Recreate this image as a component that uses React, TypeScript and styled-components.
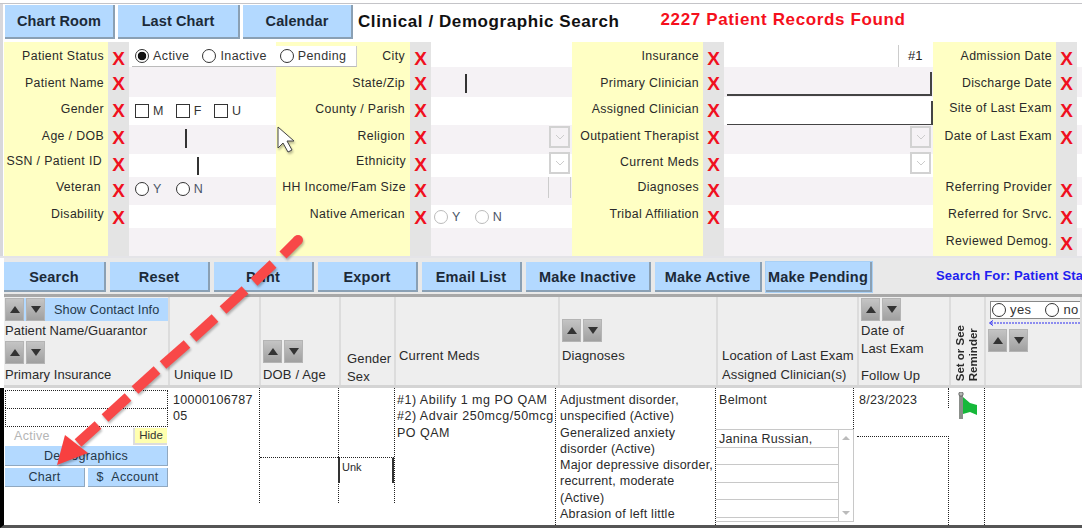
import React from "react";
import styled, { createGlobalStyle } from "styled-components";

const Global = createGlobalStyle`
  html, body { margin: 0; padding: 0; background: #fff; }
  body { font-family: "Liberation Sans", Arial, sans-serif; color: #222; }
`;

const Page = styled.div`
  position: relative;
  width: 1082px;
  height: 528px;
  overflow: hidden;
  background: #fff;
`;

const TopBar = styled.div`
  height: 39px;
  margin-top: 3px;
  padding: 1px 0 0 5px;
  box-sizing: border-box;
  border-top: 1px solid #c4c4c8;
  display: flex;
  align-items: flex-start;
  gap: 3px;
  box-shadow: inset 3px 0 0 #d8d8dc;
`;

const Tab = styled.button<{ $w: number }>`
  width: ${(p) => p.$w}px;
  height: 34px;
  background: #b3d9ff;
  border: 0;
  border-right: 2px solid #8aa0b4;
  border-bottom: 2px solid #8aa0b4;
  font: bold 14.5px "Liberation Sans", sans-serif;
  letter-spacing: 0.1px;
  color: #1c2a38;
  padding: 0;
`;

const Title = styled.div`
  margin-left: 2px;
  line-height: 33px;
  font-size: 17px;
  font-weight: bold;
  color: #111;
  letter-spacing: 0.58px;
  white-space: nowrap;
`;

const Count = styled.div`
  margin-left: 38px;
  line-height: 30px;
  font-size: 17px;
  font-weight: bold;
  color: #f5101c;
  letter-spacing: 0.63px;
  white-space: nowrap;
`;

const Form = styled.div`
  padding-left: 4px;
  box-shadow: inset 3px 0 0 #d8d8dc;
  border-bottom: 2px solid #e4e4e8;
`;

const Row = styled.div<{ $h: number }>`
  display: grid;
  grid-template-columns: 104px 21px 147px 134px 21px 141px 131px 21px 209px 123px 21px 1fr;
  height: ${(p) => p.$h}px;
`;

const Label = styled.div<{ $top: number; $pad?: number }>`
  background: #ffffc4;
  text-align: right;
  box-sizing: border-box;
  padding: ${(p) => p.$top}px ${(p) => p.$pad ?? 4}px 0 0;
  font-size: 12.3px;
  line-height: 14px;
  letter-spacing: 0.38px;
  color: #2a2a2a;
  white-space: nowrap;
`;

const Clear = styled.div<{ $top: number }>`
  background: #e4e4e4;
  text-align: center;
  box-sizing: border-box;
  padding-top: ${(p) => p.$top}px;
  font-size: 19px;
  line-height: 18px;
  font-weight: bold;
  color: #f01020;
`;

const Field = styled.div<{ $alt: boolean }>`
  position: relative;
  background: ${(p) => (p.$alt ? "#f5f2f5" : "#fff")};
  display: flex;
  align-items: flex-start;
  min-width: 0;
`;

const Option = styled.label<{ $off?: boolean; $size?: number }>`
  display: inline-flex;
  align-items: center;
  gap: 4px;
  font-size: ${(p) => p.$size ?? 12.5}px;
  letter-spacing: 0.4px;
  color: ${(p) => (p.$off ? "#4a5568" : "#333")};
  white-space: nowrap;
`;

const Round = styled.span<{ $on?: boolean; $off?: boolean }>`
  box-sizing: border-box;
  display: inline-block;
  width: 14px;
  height: 14px;
  border-radius: 50%;
  border: 1.3px solid ${(p) => (p.$off ? "#bbb" : "#333")};
  background: ${(p) => (p.$on ? "radial-gradient(circle, #111 0 4px, #fff 4.6px)" : "#fff")};
`;

const Square = styled.span`
  box-sizing: border-box;
  display: inline-block;
  width: 14px;
  height: 14px;
  border: 1.3px solid #333;
  background: #fff;
`;

const StatusBox = styled.div`
  position: absolute;
  z-index: 1;
  left: 3px;
  top: 4px;
  width: 225px;
  height: 21px;
  box-sizing: border-box;
  background: #fff;
  border-right: 1px solid #ccc;
  border-bottom: 1px solid #bbb;
  padding-left: 3px;
  display: flex;
  align-items: center;
  gap: 13px;
`;

const Options = styled.div<{ $left: number; $top: number; $gap: number }>`
  display: flex;
  gap: ${(p) => p.$gap}px;
  padding: ${(p) => p.$top}px 0 0 ${(p) => p.$left}px;
`;

const Caret = styled.span<{ $left: number; $top: number; $h: number }>`
  display: block;
  margin: ${(p) => p.$top}px 0 0 ${(p) => p.$left}px;
  width: 1.5px;
  height: ${(p) => p.$h}px;
  background: #333;
`;

const Spacer = styled.div`
  flex: 1;
`;

const SelectBtn = styled.div<{ $top: number }>`
  box-sizing: border-box;
  width: 21px;
  height: 22px;
  margin: ${(p) => p.$top}px 2px 0 0;
  border: 2px solid #d2d2d2;
  display: flex;
  align-items: center;
  justify-content: center;
`;

const IncomeBox = styled.div`
  margin-left: auto;
  width: 23px;
  height: 21px;
  margin-right: 1px;
  box-sizing: border-box;
  border: solid #ccc;
  border-width: 0 1px;
`;

const Lookup = styled.div<{ $top: number; $w: number; $h: number }>`
  box-sizing: border-box;
  margin: ${(p) => p.$top}px 0 0 3px;
  width: ${(p) => p.$w}px;
  height: ${(p) => p.$h}px;
  border-right: 2px solid #444;
  border-bottom: 2px solid #444;
`;

const Insurance = styled.div`
  margin-left: auto;
  width: 35px;
  height: 22px;
  margin-top: 3px;
  border-left: 1px solid #ccc;
  font-size: 13px;
  line-height: 22px;
  padding-left: 9px;
  box-sizing: border-box;
  color: #222;
`;

const ActionBar = styled.div`
  height: 39px;
  margin-left: 4px;
  padding-top: 4px;
  box-sizing: border-box;
  background: #e9e9e9;
  display: flex;
  align-items: flex-start;
  gap: 4px;
  border-bottom: 3px solid #a8a8a8;
`;

const Action = styled.button<{ $w: number; $glow?: boolean }>`
  width: ${(p) => p.$w}px;
  height: 30px;
  flex: none;
  background: #b3d9ff;
  border: 0;
  border-right: 2px solid #8aa0b4;
  border-bottom: 2px solid #8aa0b4;
  font: bold 14.5px "Liberation Sans", sans-serif;
  letter-spacing: 0.2px;
  color: #1c2a38;
  padding: 2px 0 0;
  box-shadow: ${(p) => (p.$glow ? "0 0 0 1px #a9d0f5" : "none")};
`;

const SearchFor = styled.div`
  margin: 6px 0 0 60px;
  font-size: 13px;
  line-height: 16px;
  font-weight: bold;
  color: #2020f0;
  letter-spacing: 0.18px;
  white-space: nowrap;
`;

const HeadRow = styled.div`
  display: flex;
  margin-left: 4px;
  height: 88px;
  background: #eee;
  border-bottom: 3px solid #d4d4d4;
`;

const HeadCell = styled.div<{ $w: number; $pl?: number; $pb?: number }>`
  width: ${(p) => p.$w}px;
  flex: none;
  box-sizing: border-box;
  border-right: 2px solid #dcdcdc;
  display: flex;
  flex-direction: column;
  justify-content: flex-end;
  padding: 0 0 ${(p) => p.$pb ?? 1}px ${(p) => p.$pl ?? 4}px;
  font-size: 13px;
  line-height: 19px;
  letter-spacing: 0.15px;
  color: #2a2a2a;
  white-space: nowrap;
  overflow: hidden;
`;

const FirstHead = styled(HeadCell)`
  justify-content: flex-start;
  padding: 1px 0 0 1px;
  line-height: 16px;
  letter-spacing: 0.05px;
`;

const TopHead = styled(HeadCell)`
  justify-content: flex-start;
  padding: 1px 0 0 2px;
  line-height: 18px;
`;

const GenderHead = styled(HeadCell)`
  justify-content: flex-start;
  padding: 53px 0 0 6px;
  line-height: 18px;
`;

const SortPair = styled.div`
  display: flex;
  gap: 2px;
  flex: none;
`;

const SortBtn = styled.span<{ $down?: boolean }>`
  box-sizing: border-box;
  width: 19px;
  height: 23px;
  background: linear-gradient(#c4c4c4, #a0a0a0);
  border: 1px solid #b4b4b4;
  display: flex;
  align-items: center;
  justify-content: center;
  &::before {
    content: "";
    border-left: 5px solid transparent;
    border-right: 5px solid transparent;
    ${(p) => (p.$down ? "border-top: 7px solid #333;" : "border-bottom: 7px solid #333;")}
  }
`;

const ContactRow = styled.div`
  display: flex;
  background: #b3d9ff;
  align-items: center;
`;

const ContactText = styled.span`
  margin-left: 9px;
  color: #25384a;
  font-size: 12.7px;
  letter-spacing: 0.1px;
`;

const HeadLine = styled.div<{ $mt?: number }>`
  margin-top: ${(p) => p.$mt ?? 0}px;
`;

const ReminderText = styled.div`
  writing-mode: vertical-rl;
  transform: rotate(180deg);
  font-size: 11.5px;
  line-height: 13px;
  font-weight: bold;
  letter-spacing: 0;
  align-self: flex-start;
  white-space: pre-line;
  text-align: left;
`;

const YesNo = styled.div`
  margin: 3px 0 0 2px;
  width: 92px;
  height: 18px;
  box-sizing: border-box;
  border: 1px solid #888;
  border-right: 0;
  background: #fff;
  display: flex;
  align-items: center;
  gap: 14px;
  padding-left: 1px;
  flex: none;
`;

const BlueLink = styled.svg`
  display: block;
  flex: none;
  margin: 1px 0 3px 0;
`;

const Body = styled.div`
  display: flex;
  height: 137px;
  border-left: 4px solid #000;
  border-bottom: 3px solid #555;
  font-size: 12.5px;
  line-height: 16.25px;
  letter-spacing: 0.3px;
  color: #2a2a2a;
`;

const BodyCell = styled.div<{ $w: number; $dotted?: boolean; $pl?: number; $ls?: number }>`
  width: ${(p) => p.$w}px;
  flex: none;
  box-sizing: border-box;
  padding: 4px 0 0 ${(p) => p.$pl ?? 3}px;
  letter-spacing: ${(p) => p.$ls ?? 0.3}px;
  ${(p) => p.$dotted && `border-right: 1px dotted #222;`}
`;

const NameCell = styled.div`
  width: 165px;
  flex: none;
  box-sizing: border-box;
  padding: 2px 1px 0 1px;
`;

const NameBox = styled.div`
  height: 18px;
  box-sizing: border-box;
  border: 1px dotted #222;
  border-bottom: 0;
`;

const NameBoxLast = styled(NameBox)`
  border-bottom: 1px dotted #222;
  height: 19px;
`;

const StatusRow = styled.div`
  display: flex;
  height: 18px;
  align-items: center;
  padding: 0 1px 0 9px;
  color: #b5b5b5;
`;

const HideBtn = styled.span`
  margin-left: auto;
  width: 34px;
  height: 17px;
  box-sizing: border-box;
  background: #ffffb0;
  border-left: 2px solid #ddd;
  border-bottom: 2px solid #ddd;
  color: #333;
  font-size: 11.5px;
  line-height: 14px;
  text-align: center;
  letter-spacing: 0;
`;

const MiniBtn = styled.button<{ $w?: number; $h?: number }>`
  display: block;
  height: ${(p) => p.$h ?? 19}px;
  width: ${(p) => (p.$w ? `${p.$w}px` : "100%")};
  background: #b3d9ff;
  border: 0;
  border-right: 1px solid #90a8c0;
  border-bottom: 1px solid #90a8c0;
  font: 12.5px "Liberation Sans", sans-serif;
  letter-spacing: 0.3px;
  color: #25384a;
  padding: 0;
`;

const MiniRow = styled.div`
  display: flex;
  gap: 3px;
  margin-top: 2px;
`;

const Demog = styled.div`
  margin-top: 1px;
`;

const DobCell = styled.div`
  width: 80px;
  height: 115px;
  flex: none;
  box-sizing: border-box;
  border-right: 1px dotted #222;
  border-left: 1px dotted #222;
`;

const GenderCol = styled.div`
  width: 57px;
  height: 115px;
  flex: none;
  box-sizing: border-box;
  border-right: 1px dotted #222;
  padding-top: 69px;
  margin-left: -1px;
`;

const GenderBox = styled.div`
  height: 26px;
  box-sizing: border-box;
  border-top: 1px dotted #222;
  border-left: 2px solid #333;
  border-right: 2px solid #333;
  padding: 2px 0 0 2px;
  font-size: 11px;
  line-height: 14px;
  letter-spacing: 0;
`;

const DobLine = styled.div`
  margin-top: 69px;
  border-top: 1px dotted #222;
`;

const LocationCol = styled.div`
  width: 138px;
  flex: none;
`;

const LocationTop = styled.div`
  height: 41px;
  box-sizing: border-box;
  border-right: 1px dotted #222;
  padding: 4px 0 0 3px;
`;

const ClinicianList = styled.div`
  width: 138px;
  height: 93px;
  box-sizing: border-box;
  border: 1px solid #c8c8c8;
  border-left: 0;
  display: flex;
`;

const ClinicianRows = styled.div`
  flex: 1;
  display: flex;
  flex-direction: column;
`;

const ClinicianRow = styled.div`
  height: 17.5px;
  box-sizing: border-box;
  border-bottom: 1px solid #c8c8c8;
  padding-left: 3px;
  line-height: 18px;
`;

const Scroll = styled.div`
  width: 15px;
  box-sizing: border-box;
  border-left: 1px solid #c8c8c8;
  display: flex;
  flex-direction: column;
  justify-content: space-between;
  align-items: center;
  padding: 6px 0;
`;

const Arrowhead = styled.span<{ $down?: boolean }>`
  border-left: 4px solid transparent;
  border-right: 4px solid transparent;
  ${(p) => (p.$down ? "border-top: 4px solid #bbb;" : "border-bottom: 4px solid #bbb;")}
`;

const DateCol = styled.div`
  width: 95px;
  flex: none;
`;

const DateTop = styled.div`
  height: 20px;
  box-sizing: border-box;
  border-right: 1px dotted #222;
  padding: 4px 0 0 5px;
  white-space: nowrap;
`;

const FollowUp = styled.div`
  margin: 28px 0 0 3px;
  height: 89px;
  box-sizing: border-box;
  border-top: 1px dotted #222;
  border-right: 1px dotted #222;
`;

const Overlay = styled.svg`
  position: absolute;
  left: 0;
  top: 0;
  z-index: 5;
  pointer-events: none;
  filter: drop-shadow(1px 2px 1px rgba(0, 0, 0, 0.28));
`;

type RowDef = {
  h: number;
  lt: number;
  xt: number;
  alt: boolean;
  l: [string, string, string, string];
  tops?: [number, number, number, number];
  pads?: [number, number, number, number];
  f1?: React.ReactNode;
  f2?: React.ReactNode;
  f3?: React.ReactNode;
};

const Chevron = () => (
  <svg width="10" height="6" viewBox="0 0 10 6">
    <path d="M1 1l4 4 4-4" fill="none" stroke="#ccc" strokeWidth="1" />
  </svg>
);

const SelectEnd = ({ top }: { top: number }) => (
  <>
    <Spacer />
    <SelectBtn $top={top}>
      <Chevron />
    </SelectBtn>
  </>
);

const rows: RowDef[] = [
  {
    h: 25, lt: 7, xt: 8, alt: false,
    l: ["Patient Status", "City", "Insurance", "Admission Date"],
    f1: (
      <StatusBox>
        <Option><Round $on />Active</Option>
        <Option><Round />Inactive</Option>
        <Option><Round />Pending</Option>
      </StatusBox>
    ),
    f3: <Insurance>#1</Insurance>,
  },
  {
    h: 30, lt: 9, xt: 8, alt: true,
    l: ["Patient Name", "State/Zip", "Primary Clinician", "Discharge Date"],
    f2: <Caret $left={34} $top={7} $h={19} />,
    f3: <Lookup $top={5} $w={205} $h={24} />,
  },
  {
    h: 28, lt: 5, xt: 5, alt: false,
    l: ["Gender", "County / Parish", "Assigned Clinician", "Site of Last Exam"],
    tops: [5, 5, 5, 4],
    f1: (
      <Options $left={6} $top={7} $gap={12}>
        <Option><Square />M</Option>
        <Option><Square />F</Option>
        <Option><Square />U</Option>
      </Options>
    ),
    f3: <Lookup $top={4} $w={207} $h={25} />,
  },
  {
    h: 29, lt: 4, xt: 4, alt: true,
    l: ["Age / DOB", "Religion", "Outpatient Therapist", "Date of Last Exam"],
    f1: <Caret $left={56} $top={4} $h={19} />,
    f2: <SelectEnd top={1} />,
    f3: <SelectEnd top={1} />,
  },
  {
    h: 23, lt: 0, xt: 2, alt: false,
    l: ["SSN / Patient ID", "Ethnicity", "Current Meds", ""],
    tops: [0, 0, 1, 0],
    pads: [6, 4, 4, 4],
    f1: <Caret $left={68} $top={3} $h={18} />,
    f2: <SelectEnd top={-2} />,
    f3: <SelectEnd top={-2} />,
  },
  {
    h: 28, lt: 3, xt: 5, alt: true,
    l: ["Veteran", "HH Income/Fam Size", "Diagnoses", "Referring Provider"],
    pads: [7, 4, 4, 4],
    f1: (
      <Options $left={6} $top={5} $gap={14}>
        <Option $off><Round />Y</Option>
        <Option $off><Round />N</Option>
      </Options>
    ),
    f2: <IncomeBox />,
  },
  {
    h: 23, lt: 2, xt: 4, alt: false,
    l: ["Disability", "Native American", "Tribal Affiliation", "Referred for Srvc."],
    f2: (
      <Options $left={3} $top={5} $gap={14}>
        <Option $off><Round $off />Y</Option>
        <Option $off><Round $off />N</Option>
      </Options>
    ),
  },
  {
    h: 28, lt: 6, xt: 7, alt: true,
    l: ["", "", "", "Reviewed Demog."],
  },
];

const actions: [string, number][] = [
  ["Search", 102], ["Reset", 100], ["Print", 100], ["Export", 100], ["Email List", 100],
  ["Make Inactive", 125], ["Make Active", 107], ["Make Pending", 106],
];

const Sort = () => (
  <SortPair>
    <SortBtn />
    <SortBtn $down />
  </SortPair>
);

const diagnoses = [
  "Adjustment disorder,", "unspecified (Active)", "Generalized anxiety", "disorder (Active)",
  "Major depressive disorder,", "recurrent, moderate", "(Active)", "Abrasion of left little",
];

const dashes = [
  "M298 240L283 255", "M273 264L254 282", "M245 290L223 310", "M215 318L193 338",
  "M187 344L163 365", "M157 370L135 390", "M128 397L105 418", "M98 425L78 443",
];

export default function App() {
  return (
    <Page>
      <Global />
      <TopBar>
        <Tab $w={110}>Chart Room</Tab>
        <Tab $w={122}>Last Chart</Tab>
        <Tab $w={110}>Calendar</Tab>
        <Title>Clinical / Demographic Search</Title>
        <Count>2227 Patient Records Found</Count>
      </TopBar>

      <Form>
        {rows.map((r, i) => (
          <Row key={i} $h={r.h}>
            <Label $top={r.tops?.[0] ?? r.lt} $pad={r.pads?.[0]}>{r.l[0]}</Label>
            <Clear $top={r.xt}>{r.l[0] ? "X" : ""}</Clear>
            <Field $alt={r.alt}>{r.f1}</Field>
            <Label $top={r.tops?.[1] ?? r.lt} $pad={r.pads?.[1] ?? 5}>{r.l[1]}</Label>
            <Clear $top={r.xt}>{r.l[1] ? "X" : ""}</Clear>
            <Field $alt={r.alt}>{r.f2}</Field>
            <Label $top={r.tops?.[2] ?? r.lt} $pad={r.pads?.[2]}>{r.l[2]}</Label>
            <Clear $top={r.xt}>{r.l[2] ? "X" : ""}</Clear>
            <Field $alt={r.alt}>{r.f3}</Field>
            <Label $top={r.tops?.[3] ?? r.lt} $pad={r.pads?.[3]}>{r.l[3]}</Label>
            <Clear $top={r.xt}>{r.l[3] ? "X" : ""}</Clear>
            <Field $alt={r.alt} />
          </Row>
        ))}
      </Form>

      <ActionBar>
        {actions.map(([t, w]) => (
          <Action key={t} $w={w} $glow={t === "Make Pending"}>{t}</Action>
        ))}
        <SearchFor>Search For: Patient Status</SearchFor>
      </ActionBar>

      <HeadRow>
        <FirstHead $w={166}>
          <ContactRow>
            <Sort />
            <ContactText>Show Contact Info</ContactText>
          </ContactRow>
          <HeadLine $mt={2}>Patient Name/Guarantor</HeadLine>
          <HeadLine $mt={2}><Sort /></HeadLine>
          <HeadLine $mt={3}>Primary Insurance</HeadLine>
        </FirstHead>
        <HeadCell $w={91}>Unique ID</HeadCell>
        <HeadCell $w={80} $pl={2}>
          <Sort />
          <HeadLine $mt={2}>DOB / Age</HeadLine>
        </HeadCell>
        <GenderHead $w={55}>
          <HeadLine>Gender</HeadLine>
          <HeadLine>Sex</HeadLine>
        </GenderHead>
        <HeadCell $w={164} $pl={3}>
          <HeadLine>Current Meds</HeadLine>
          <HeadLine>&nbsp;</HeadLine>
        </HeadCell>
        <HeadCell $w={158} $pl={2}>
          <Sort />
          <HeadLine $mt={4}>Diagnoses</HeadLine>
          <HeadLine>&nbsp;</HeadLine>
        </HeadCell>
        <HeadCell $w={141}>
          <HeadLine>Location of Last Exam</HeadLine>
          <HeadLine>Assigned Clinician(s)</HeadLine>
        </HeadCell>
        <TopHead $w={92}>
          <Sort />
          <HeadLine $mt={1}>Date of</HeadLine>
          <HeadLine>Last Exam</HeadLine>
          <HeadLine $mt={9}>Follow Up</HeadLine>
        </TopHead>
        <HeadCell $w={35} $pb={4} $pl={3}>
          <ReminderText>{"Set or See\nReminder"}</ReminderText>
        </HeadCell>
        <TopHead $w={96}>
          <YesNo>
            <Option $size={13}><Round />yes</Option>
            <Option $size={13}><Round />no</Option>
          </YesNo>
          <BlueLink width="94" height="6" viewBox="0 0 94 6">
            <path d="M3 3H94" stroke="#2a2af0" strokeWidth="1" strokeDasharray="2 1" />
            <path d="M5 0.5L1.5 3 5 5.5" fill="none" stroke="#2a2af0" />
          </BlueLink>
          <Sort />
        </TopHead>
      </HeadRow>

      <Body>
        <NameCell>
          <NameBox />
          <NameBoxLast />
          <StatusRow>
            Active
            <HideBtn>Hide</HideBtn>
          </StatusRow>
          <Demog><MiniBtn $h={20}>Demographics</MiniBtn></Demog>
          <MiniRow>
            <MiniBtn $w={80}>Chart</MiniBtn>
            <MiniBtn $w={80}>$&nbsp;&nbsp;Account</MiniBtn>
          </MiniRow>
        </NameCell>
        <BodyCell $w={90} $pl={4}>
          10000106787
          <br />
          05
        </BodyCell>
        <DobCell><DobLine /></DobCell>
        <GenderCol><GenderBox>Unk</GenderBox></GenderCol>
        <BodyCell $w={161} $dotted $pl={2} $ls={0.5}>
          #1) Abilify 1 mg PO QAM
          <br />
          #2) Advair 250mcg/50mcg
          <br />
          PO QAM
        </BodyCell>
        <BodyCell $w={160} $dotted $pl={4} $ls={0.25}>
          {diagnoses.map((d) => (
            <div key={d}>{d}</div>
          ))}
        </BodyCell>
        <LocationCol>
          <LocationTop>Belmont</LocationTop>
          <ClinicianList>
            <ClinicianRows>
              <ClinicianRow>Janina Russian,</ClinicianRow>
              <ClinicianRow />
              <ClinicianRow />
              <ClinicianRow />
              <ClinicianRow />
            </ClinicianRows>
            <Scroll>
              <Arrowhead />
              <Arrowhead $down />
            </Scroll>
          </ClinicianList>
        </LocationCol>
        <DateCol>
          <DateTop>8/23/2023</DateTop>
          <FollowUp />
        </DateCol>
        <BodyCell $w={36} $dotted>
          <svg width="26" height="30" viewBox="0 0 26 30">
            <rect x="7" y="2" width="4" height="25" fill="#8a8f8a" />
            <circle cx="9" cy="2" r="2.2" fill="#b4b8b4" stroke="#555" strokeWidth="0.8" />
            <path d="M11 5L18 11 25 13V23L18 20 11 22z" fill="#16b83a" />
          </svg>
        </BodyCell>
      </Body>

      <Overlay width="1082" height="528" viewBox="0 0 1082 528">
        <circle cx="298" cy="240" r="5" fill="#f84848" />
        {dashes.map((d) => (
          <path key={d} d={d} stroke="#f84848" strokeWidth="10" fill="none" />
        ))}
        <path d="M57 465L65 435 88 453z" fill="#f84040" />
        <path d="M278 127v21l5-5 5 9 4-2-5-9h7z" fill="#fff" stroke="#444" strokeWidth="1" />
      </Overlay>
    </Page>
  );
}
